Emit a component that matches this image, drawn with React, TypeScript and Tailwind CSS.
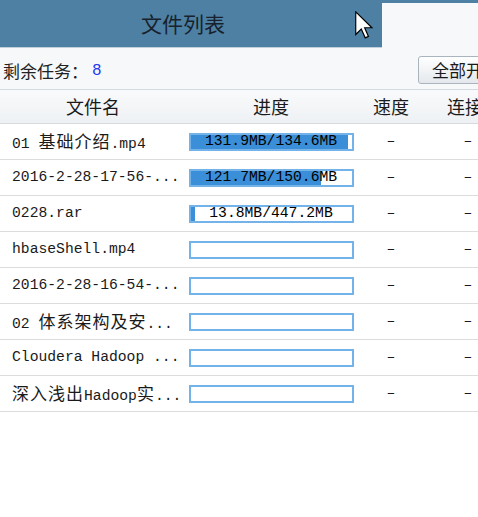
import React from "react";

const rows = [
  { name: "01 基础介绍.mp4", size: "131.9MB/134.6MB", pct: 98 },
  { name: "2016-2-28-17-56-...", size: "121.7MB/150.6MB", pct: 80.8 },
  { name: "0228.rar", size: "13.8MB/447.2MB", pct: 3.1 },
  { name: "hbaseShell.mp4", size: "", pct: 0 },
  { name: "2016-2-28-16-54-...", size: "", pct: 0 },
  { name: "02 体系架构及安...", size: "", pct: 0 },
  { name: "Cloudera Hadoop ...", size: "", pct: 0 },
  { name: "深入浅出Hadoop实...", size: "", pct: 0 },
];

// split file names so the CJK runs get the wider full-width look
function Mixed({ text }: { text: string }) {
  const parts = text.split(/([\u4e00-\u9fff]+)/).filter(Boolean);
  return (
    <>
      {parts.map((p, i) =>
        /[\u4e00-\u9fff]/.test(p) ? (
          <span key={i} className="text-[17px] tracking-[1px] font-['Noto_Sans_CJK_SC',sans-serif]">{p}</span>
        ) : (
          <span key={i}>{p}</span>
        )
      )}
    </>
  );
}

function Bar({ pct, size }: { pct: number; size: string }) {
  return (
    <div className="relative w-[165px] h-[18px] border-2 border-[#74b2ea] bg-white">
      <div className="h-full bg-[#3b8fd8]" style={{ width: `${pct}%` }} />
      {size && (
        <div className="absolute inset-0 flex items-center justify-center text-[14.7px] text-black leading-none">
          {size}
        </div>
      )}
    </div>
  );
}

function Cursor() {
  return (
    <svg className="absolute left-[355px] top-[11px]" width="19" height="28" viewBox="0 0 13 19">
      <path d="M0.5 0.5 L0.5 16 L4.3 12.3 L7 18.3 L9.2 17.3 L6.6 11.4 L11.6 11.4 Z" fill="#fff" stroke="#000" strokeWidth="0.8" strokeLinejoin="miter" />
    </svg>
  );
}

export default function App() {
  return (
    <div className="relative w-[478px] h-[517px] overflow-hidden bg-white font-['Liberation_Mono','Noto_Sans_CJK_SC',monospace] text-[#1a1a1a]">
      <div className="w-[560px]">
        <div className="flex h-[48px] bg-[#f6f8fa] border-t-[3px] border-[#4e80a3]">
          <div className="w-[382px] -mt-[3px] pr-[16px] bg-[#4e80a3] border-b border-[#c3d0dc] flex items-center justify-center text-[21px] text-[#17222d] font-['Noto_Sans_CJK_SC',sans-serif]">
            文件列表
          </div>
        </div>

        <div className="flex items-center h-[42px] bg-[#f6f8fa] border-b border-[#d3d9df]">
          <div className="w-[418px] pl-[3px] pt-[5px] flex items-center">
            <span className="text-[17px] text-[#222] font-['Noto_Sans_CJK_SC',sans-serif]">剩余任务：</span>
            <span className="ml-[4px] text-[16px] text-[#2638f0]">8</span>
          </div>
          <button className="h-[28px] w-[100px] mt-[2px] pl-[13px] text-left rounded-[3px] border border-[#aab4be] bg-gradient-to-b from-white to-[#e4e8ec] text-[17px] text-[#1a1a1a] font-['Noto_Sans_CJK_SC',sans-serif] leading-none">
            全部开始
          </button>
        </div>

        <div className="flex items-center h-[34px] bg-gradient-to-b from-[#f9fafb] to-[#eef1f4] border-b border-[#d6dbe0] text-[18px] text-[#1a1a1a] font-['Noto_Sans_CJK_SC',sans-serif]">
          <div className="w-[186px] text-center">文件名</div>
          <div className="w-[170px] text-center">进度</div>
          <div className="w-[70px] text-center">速度</div>
          <div className="w-[96px] text-center">连接数</div>
        </div>

        {rows.map((r) => (
          <div key={r.name} className="flex items-center h-[36px] border-b border-[#dcdcdc] bg-white text-[14.7px]">
            <div className="w-[186px] pl-[12px] whitespace-pre">
              <Mixed text={r.name} />
            </div>
            <div className="w-[170px] flex justify-center">
              <Bar pct={r.pct} size={r.size} />
            </div>
            <div className="w-[70px] text-center">–</div>
            <div className="w-[96px] pr-[12px] text-center">–</div>
          </div>
        ))}
      </div>
      <Cursor />
    </div>
  );
}
